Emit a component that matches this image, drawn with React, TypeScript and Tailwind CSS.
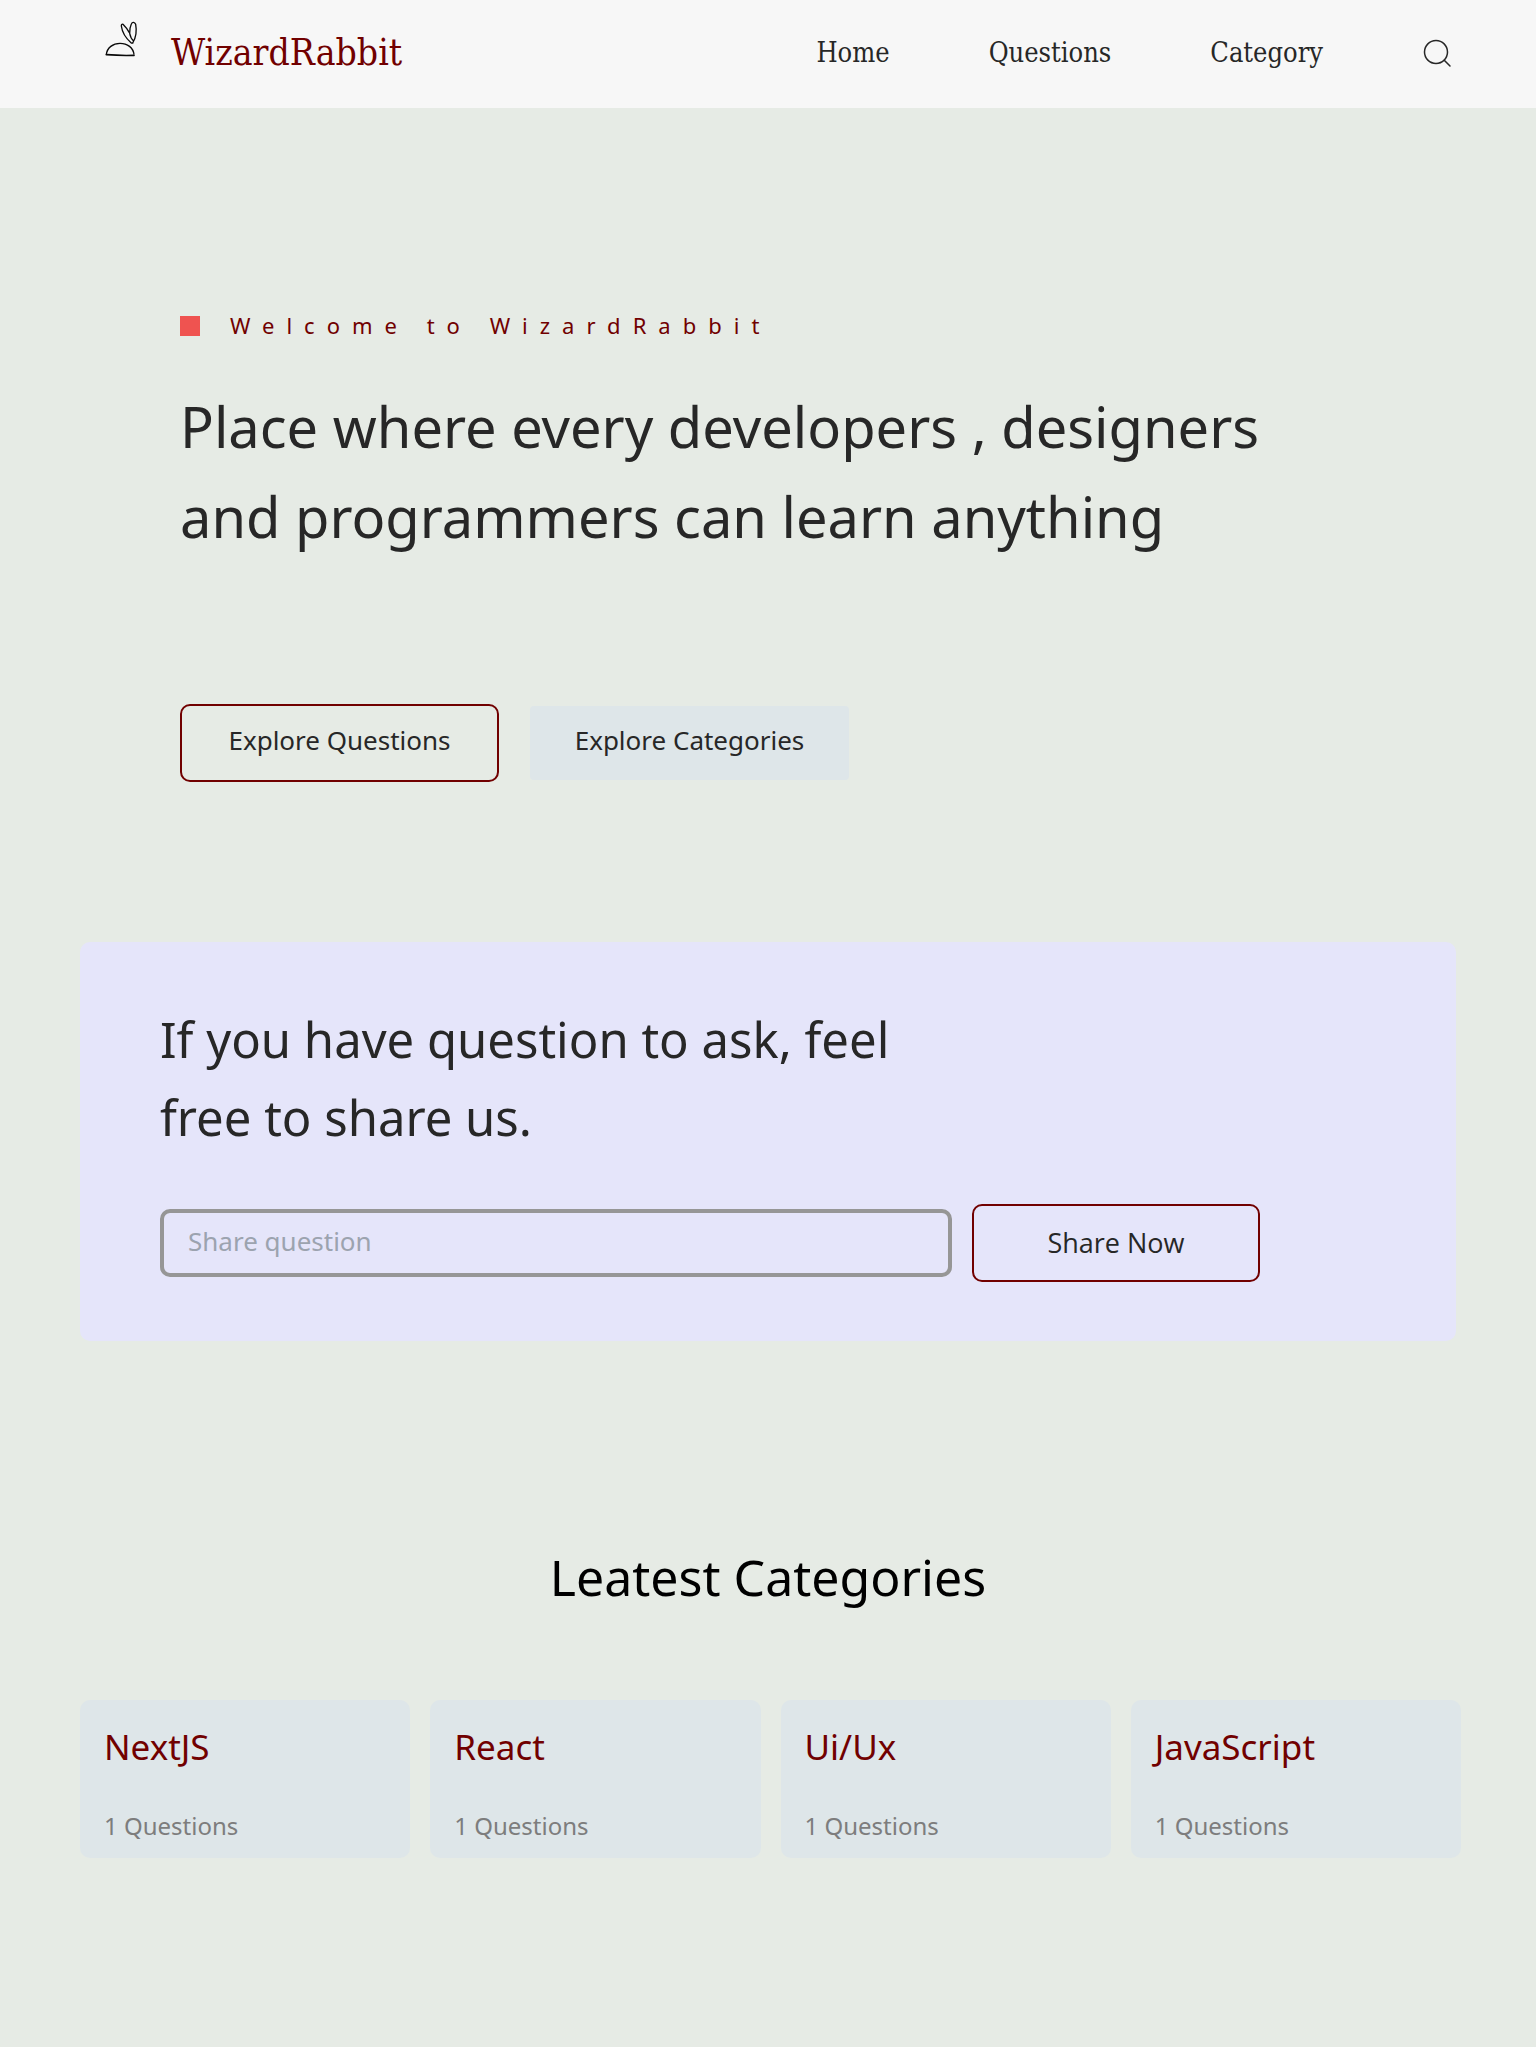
const categories = [
  { name: "NextJS", count: 1 },
  { name: "React", count: 1 },
  { name: "Ui/Ux", count: 1 },
  { name: "JavaScript", count: 1 },
];

function RabbitLogo() {
  return (
    <svg className="h-10 w-10" viewBox="30 24 120 120" fill="none" stroke="#0a0a0a" strokeWidth="4" strokeLinejoin="round" aria-hidden="true">
      <path d="M34 131C36 110 54 97 75 97C97 97 115 110 117 131" />
      <path d="M34 131C60 133 92 134 117 133" strokeWidth="5" strokeLinecap="round" />
      <path d="M103 65C98 56 90 46 84 40C81 38 79 41 79 45C81 60 92 81 108 95C110 97 113 97 114 95" />
      <path d="M113 96C121 83 126 61 122 40C119 33 112 32 109 39C105 47 104 57 104 67C106 77 111 86 116 90" />
    </svg>
  );
}

function SearchIcon() {
  return (
    <svg className="h-[30px] w-[30px]" viewBox="0 0 30 30" fill="none" stroke="#272727" strokeWidth="1.5" strokeLinecap="round" aria-hidden="true">
      <circle cx="14" cy="14" r="11.5" />
      <path d="M22.5 22.5L28 28" />
    </svg>
  );
}

export default function App() {
  return (
    <div className="min-h-screen bg-[#e6ebe5] font-['Noto_Sans',sans-serif] text-[#272727]">
      <header className="flex h-[108px] items-center justify-between bg-[#f7f7f7] pr-[84px] pb-[2px] pl-[105px] font-['DejaVu_Serif_Condensed','DejaVu_Serif',serif]">
        <a href="#" className="flex items-center text-[#710000]">
          <span className="mb-7"><RabbitLogo /></span>
          <span className="ml-[26px] text-[37px] leading-[52px]">WizardRabbit</span>
        </a>
        <nav className="flex items-center gap-[99px] text-[27px] leading-10">
          <a href="#home">Home</a>
          <a href="#questions">Questions</a>
          <a href="#category">Category</a>
          <button type="button" aria-label="Search"><SearchIcon /></button>
        </nav>
      </header>

      <main>
        <section className="px-[180px] pt-[201px]">
          <p className="flex items-center gap-[30px] text-[22px] leading-8 tracking-[12px] text-[#710000]">
            <span className="mt-[2px] h-5 w-5 bg-[#ef5350]" />
            Welcome to WizardRabbit
          </p>
          <h1 className="mt-10 max-w-[1120px] text-[56px] leading-[90px]">
            Place where every developers , designers and programmers can learn anything
          </h1>
          <div className="mt-[143px] flex items-center gap-[31px] text-[26px] leading-10">
            <a href="#questions" className="flex h-[78px] w-[319px] justify-center rounded-[10px] border-2 border-[#710000] pt-[14px]">Explore Questions</a>
            <a href="#category" className="flex h-[74px] w-[319px] justify-center rounded-[4px] bg-[#dee6e9] pt-[14px]">Explore Categories</a>
          </div>
        </section>

        <section className="mt-40 mr-20 ml-20 rounded-[10px] bg-[#e5e5fa] px-20 pt-[58px] pb-[59px]">
          <h2 className="max-w-[800px] text-[49px] leading-[78px]">If you have question to ask, feel free to share us.</h2>
          <form className="mt-12 flex items-center gap-5">
            <input
              type="text"
              aria-label="Share question"
              placeholder="Share question"
              className="h-[68px] w-[792px] rounded-[10px] border-4 border-[#969696] bg-transparent px-6 pb-1 text-[26px] placeholder:text-[#9ca3af]"
            />
            <button type="button" className="h-[78px] w-[288px] rounded-[10px] border-2 border-[#710000] font-['Open_Sans',sans-serif] text-[27px]">Share Now</button>
          </form>
        </section>

        <section className="px-20 pt-[197px] pb-[150px]">
          <h2 className="text-center text-[50px] leading-[78px] text-black">Leatest Categories</h2>
          <div className="mt-[84px] -mr-[5px] grid grid-cols-4 gap-5">
            {categories.map((category) => (
              <a key={category.name} href="#category" className="rounded-[10px] bg-[#dee6e9] px-6 pt-5 pb-3">
                <h3 className="text-[35px] leading-[54px] text-[#710000]">{category.name}</h3>
                <p className="mt-8 text-2xl leading-10 text-[#7d7d7d]">{category.count} Questions</p>
              </a>
            ))}
          </div>
        </section>
      </main>
    </div>
  );
}
